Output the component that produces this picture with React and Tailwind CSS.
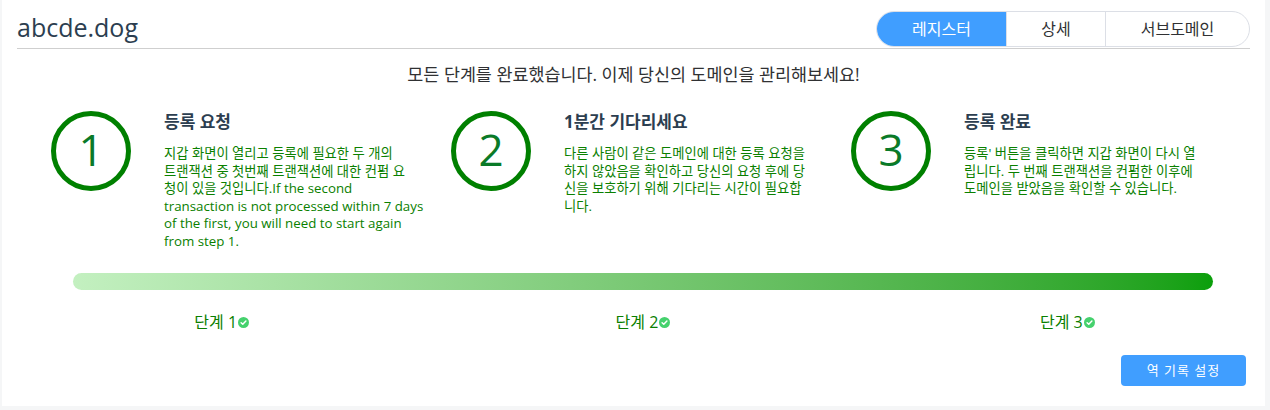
const steps = [
  {
    n: "1",
    title: "등록 요청",
    lines: [
      "지갑 화면이 열리고 등록에 필요한 두 개의",
      "트랜잭션 중 첫번째 트랜잭션에 대한 컨펌 요",
      "청이 있을 것입니다.If the second",
      "transaction is not processed within 7 days",
      "of the first, you will need to start again",
      "from step 1.",
    ],
  },
  {
    n: "2",
    title: "1분간 기다리세요",
    lines: [
      "다른 사람이 같은 도메인에 대한 등록 요청을",
      "하지 않았음을 확인하고 당신의 요청 후에 당",
      "신을 보호하기 위해 기다리는 시간이 필요합",
      "니다.",
    ],
  },
  {
    n: "3",
    title: "등록 완료",
    lines: [
      "등록' 버튼을 클릭하면 지갑 화면이 다시 열",
      "립니다. 두 번째 트랜잭션을 컨펌한 이후에",
      "도메인을 받았음을 확인할 수 있습니다.",
    ],
  },
];

function Check() {
  return (
    <svg width="11" height="11" viewBox="0 0 12 12" className="inline-block ml-[1px]">
      <circle cx="6" cy="6" r="6" fill="#45d16d" />
      <path d="M3.4 6.2 L5.2 7.9 L8.6 4.4" fill="none" stroke="#fff" strokeWidth="1.6" strokeLinecap="round" strokeLinejoin="round" />
    </svg>
  );
}

export default function App() {
  return (
    <div
      className="w-[1270px] h-[410px] bg-[#f5f6f7] pl-[2px] pr-[5px]"
      style={{ fontFamily: '"Open Sans", "Noto Sans CJK KR", sans-serif' }}
    >
      <div className="bg-white h-[406px] px-[15px]">
        {/* header */}
        <div className="flex items-end justify-between h-[49px] border-b border-[#cfcfcf]">
          <h1 className="text-[25px] leading-[30px] text-[#2c3e50] pb-[6px]">abcde.dog</h1>
          <div className="flex h-[36px] mb-[1px] rounded-full border border-[#dcdfe6] overflow-hidden text-[16px]">
            <button className="w-[129px] bg-[#409eff] text-white">레지스터</button>
            <button className="w-[99px] border-l border-[#dcdfe6] text-[#303133]">상세</button>
            <button className="w-[144px] border-l border-[#dcdfe6] text-[#303133]">서브도메인</button>
          </div>
        </div>

        <p className="text-center text-[17.4px] text-[#303133] mt-[14px] leading-[22px]">
          모든 단계를 완료했습니다. 이제 당신의 도메인을 관리해보세요!
        </p>

        {/* steps */}
        <div className="grid grid-cols-[400px_400px_400px] pl-[34px] mt-[26px] h-[162px]">
          {steps.map((s) => (
            <div key={s.n} className="flex gap-[33px]">
              <div className="w-[80px] h-[80px] shrink-0 rounded-full border-[5px] border-[#008000] flex items-center justify-center text-[44px] text-[#0a7a28] leading-none pb-[4px]">
                {s.n}
              </div>
              <div className="w-[260px] pt-[1px]">
                <h3 className="text-[17px] font-bold text-[#2c3e50] leading-[20px]">{s.title}</h3>
                <div className="mt-[13px] text-[13.3px] leading-[17.5px] text-[#0a8000] whitespace-nowrap">
                  {s.lines.map((l, i) => (
                    <div key={i}>{l}</div>
                  ))}
                </div>
              </div>
            </div>
          ))}
        </div>

        {/* progress */}
        <div className="pl-[56px] pr-[37px]">
          <div className="h-[17px] rounded-full bg-gradient-to-r from-[#c3f0c0] to-[#0a9f0a]" />
        </div>

        <div className="grid grid-cols-3 ml-[-6px] w-[1264px] mt-[22px] text-[16px] text-[#0a8000] leading-[20px]">
          <div className="flex items-center justify-center">단계 1<Check /></div>
          <div className="flex items-center justify-center">단계 2<Check /></div>
          <div className="flex items-center justify-center pl-[6px]">단계 3<Check /></div>
        </div>

        <div className="flex justify-end mt-[23px] pr-[4px]">
          <button className="w-[125px] h-[31px] rounded-[4px] bg-[#409eff] text-white text-[13px] tracking-[1px]">
            역 기록 설정
          </button>
        </div>
      </div>
    </div>
  );
}
